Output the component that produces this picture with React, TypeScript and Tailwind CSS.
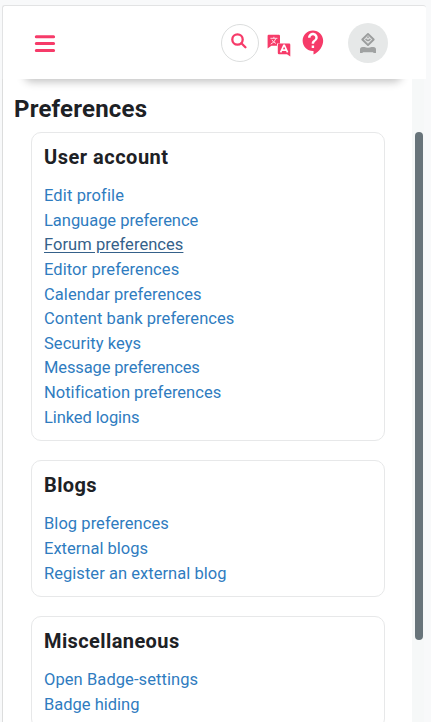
import { MdContactSupport } from 'react-icons/md';
import { clsx } from 'clsx';

type PreferenceLink = {
  label: string;
  tracking?: string;
  active?: boolean;
};

type Section = {
  title: string;
  titleTracking: string;
  links: PreferenceLink[];
};

const sections: Section[] = [
  {
    title: 'User account',
    titleTracking: 'tracking-[0.5px]',
    links: [
      { label: 'Edit profile', tracking: 'tracking-[0.12px]' },
      { label: 'Language preference', tracking: 'tracking-[-0.03px]' },
      { label: 'Forum preferences', tracking: 'tracking-[0.05px]', active: true },
      { label: 'Editor preferences', tracking: 'tracking-[0.08px]' },
      { label: 'Calendar preferences', tracking: 'tracking-[0.05px]' },
      { label: 'Content bank preferences', tracking: 'tracking-[0.07px]' },
      { label: 'Security keys', tracking: 'tracking-[0.06px]' },
      { label: 'Message preferences', tracking: 'tracking-[-0.13px]' },
      { label: 'Notification preferences', tracking: 'tracking-[0.01px]' },
      { label: 'Linked logins', tracking: 'tracking-[-0.1px]' },
    ],
  },
  {
    title: 'Blogs',
    titleTracking: 'tracking-[0.4px]',
    links: [
      { label: 'Blog preferences', tracking: 'tracking-[0.05px]' },
      { label: 'External blogs' },
      { label: 'Register an external blog', tracking: 'tracking-[0.04px]' },
    ],
  },
  {
    title: 'Miscellaneous',
    titleTracking: 'tracking-[0.4px]',
    links: [
      { label: 'Open Badge-settings', tracking: 'tracking-[0.08px]' },
      { label: 'Badge hiding' },
    ],
  },
];

function MenuIcon() {
  return (
    <svg width="22" height="18" viewBox="0 0 22 18" fill="none" stroke="#f63b69" strokeWidth="3" strokeLinecap="round">
      <path d="M2.3 1.8h17.3M2.3 8.6h17.3M2.3 15.5h17.3" />
    </svg>
  );
}

function SearchIcon() {
  return (
    <svg width="16" height="16" viewBox="0 0 16 16" fill="none" stroke="#f63b69" strokeWidth="2.3" strokeLinecap="round">
      <circle cx="6.5" cy="6.5" r="5.2" />
      <path d="M10.4 10.3l4 3.9" />
    </svg>
  );
}

function TranslateIcon() {
  return (
    <svg width="24" height="23" viewBox="0 0 24 23">
      <path d="M1.6.8h10.2q1.2 0 1.2 1.2v7.6H10v2.2H4.4L.6 14.4V2q0-1.2 1-1.2z" fill="#f63b69" />
      <path d="M3.4 4.3h7M6.9 2.8v1.5M8.9 4.5Q7.6 8.4 3.7 10.2M4.9 5.8q1.3 2.6 4 3.6" fill="none" stroke="#ffdce5" strokeWidth="1" />
      <path d="M12 9.6h10.2q1.1 0 1.1 1.1v11.8l-3.3-2.3h-8q-1.2 0-1.2-1.2v-8.2q0-1.2 1.2-1.2z" fill="#f63b69" />
      <path d="M13.6 18.4l3.2-7.1h.6l3.2 7.1M14.8 16.1h4.6" fill="none" stroke="#fff" strokeWidth="1.6" />
    </svg>
  );
}

function AvatarIcon() {
  return (
    <svg width="18" height="22" viewBox="0 0 18 22">
      <path d="M9 1.9l5.7 5.6L9 13.1 3.3 7.500z" fill="#dcdddd" stroke="#9b9d9d" strokeWidth="1.9" strokeLinejoin="round" />
      <path d="M6.6 7q2.4 3 4.800 0M9 4.3v1.8" fill="none" stroke="#9b9d9d" strokeWidth="1.4" />
      <path d="M1 21v-3.400q0-2.600 2.600-2.600h1.800q3.600 1.400 7.200 0h1.800q2.600 0 2.600 2.600V21h-2.200l-1-.8H4.200l-1 .8z" fill="#a0a2a2" />
    </svg>
  );
}

function Navbar() {
  return (
    <header className="relative z-10 w-[424px] shrink-0">
      {/* Soft shadow along the bottom edge */}
      <div className="absolute right-[24px] bottom-0 left-[22px] h-4 rounded-[8px] shadow-[0_3px_8px_rgba(0,0,0,0.24)]" />
      <div className="relative flex h-[74px] items-center rounded-t-[3px] border-t border-l border-[#e2e3e4] bg-white pl-[31px]">
        <button type="button" aria-label="Menu" className="mt-[2px]">
          <MenuIcon />
        </button>
        <button
          type="button"
          aria-label="Search"
          className="ml-[165px] flex size-[38px] items-center justify-center rounded-full border border-[#dcdede] pr-[2px] pb-[3px]"
        >
          <SearchIcon />
        </button>
        <button type="button" aria-label="Language" className="mt-[5px] ml-[8px]">
          <TranslateIcon />
        </button>
        <button type="button" aria-label="Help" className="ml-[8px]">
          <MdContactSupport className="size-[29px] text-[#f63b69]" />
        </button>
        <button
          type="button"
          aria-label="Account"
          className="ml-[20px] flex size-[40px] items-center justify-center rounded-full bg-[#e6e8e8]"
        >
          <AvatarIcon />
        </button>
      </div>
    </header>
  );
}

function PreferenceCard({ title, titleTracking, links }: Section) {
  return (
    <section className="rounded-[10px] border border-[#e7e8e9] pt-[11px] pr-3 pb-[10px] pl-[12px]">
      <h2 className={clsx('text-[20px] leading-[26px] font-bold text-[#1d2125]', titleTracking)}>{title}</h2>
      <ul className="mt-[14px]">
        {links.map((link) => (
          <li key={link.label} className="h-[24.65px] text-[16.5px] leading-[24.65px] whitespace-nowrap">
            <a
              href="#"
              className={clsx(
                link.tracking,
                link.active ? 'text-[#35618a] underline underline-offset-2' : 'text-[#2f7cbf]',
              )}
            >
              {link.label}
            </a>
          </li>
        ))}
      </ul>
    </section>
  );
}

export default function App() {
  return (
    <div className="flex h-[722px] w-[431px] flex-col overflow-hidden bg-[#f8f9fa] pt-[5px] pl-[2px] font-[Roboto,sans-serif]">
      <Navbar />
      <div className="flex min-h-0 flex-1">
        <main className="w-[410px] shrink-0 overflow-hidden border-l border-[#dcdddd] bg-white pt-[15px] pl-[11px]">
          <h1 className="text-[24px] leading-[30px] font-bold tracking-[0.2px] text-[#1d2125]">Preferences</h1>
          <div className="mt-[8px] ml-[17px] flex w-[354px] flex-col gap-[19px]">
            {sections.map((section) => (
              <PreferenceCard key={section.title} {...section} />
            ))}
          </div>
        </main>
        {/* Scrollbar */}
        <div className="w-[12px] bg-[#f6f8f8] pt-[53px] pl-[2.5px]">
          <div className="h-[508px] w-[8.5px] rounded-full bg-[#68747a]" />
        </div>
      </div>
    </div>
  );
}
